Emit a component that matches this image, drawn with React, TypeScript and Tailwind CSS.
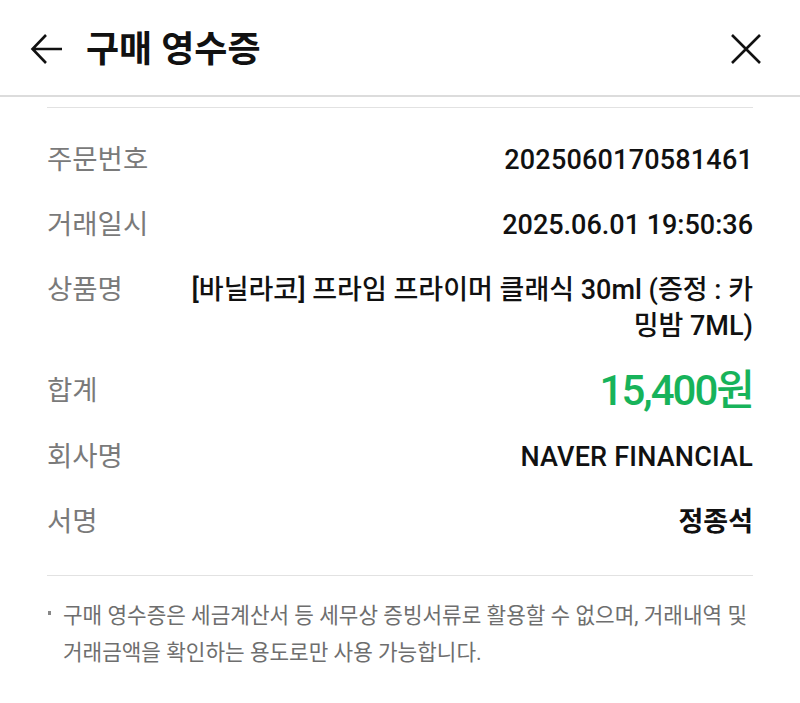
import React from "react";

export default function App() {
  const font = { fontFamily: "Roboto, 'Noto Sans CJK KR', 'Noto Sans', sans-serif" };
  return (
    <div className="w-[800px] h-[703px] bg-white overflow-hidden" style={font}>
      <div className="h-[97px] flex items-center justify-between pl-[30px] pr-[38px] border-b-2 border-[#dcdcdc]">
        <div className="flex items-center">
          <svg width="34" height="34" viewBox="0 0 34 34" className="mt-[2px]">
            <path d="M32 17H3M16 3L2.5 17L16 31" fill="none" stroke="#111" strokeWidth="2.6" />
          </svg>
          <div className="ml-[22px] mt-[4px] text-[36px] font-bold text-[#111] leading-none whitespace-nowrap">구매 영수증</div>
        </div>
        <svg width="32" height="32" viewBox="0 0 32 32" className="mt-[2px]">
          <path d="M2 2L30 30M30 2L2 30" fill="none" stroke="#111" strokeWidth="2.6" />
        </svg>
      </div>
      <div className="px-[47px] pt-[10px]">
        <div className="border-t border-[#e2e2e2]" />
        <div className="pt-[19px]">
          <Row label="주문번호" value={<span className="tracking-[0.2px]">2025060170581461</span>} />
          <Row label="거래일시" value={<span>2025.06.01 19:50:36</span>} />
          <Row
            label="상품명"
            value={
              <span>
                [바닐라코] 프라임 프라이머 클래식 30ml (증정 : 카
                <br />
                밍밤 7ML)
              </span>
            }
          />
          <div className="flex justify-between items-center h-[66px]">
            <div className="text-[27.5px] text-[#7a7a7a] shrink-0 w-[140px] leading-[36px]">합계</div>
            <span className="text-[42px] leading-[44px] font-medium text-[#17b35a] tracking-[-2px] whitespace-nowrap">15,400원</span>
          </div>
          <Row label="회사명" value={<span className="tracking-[0.2px]">NAVER FINANCIAL</span>} />
          <Row label="서명" value={<span className="font-bold">정종석</span>} />
        </div>
        <div className="mt-[21px] border-t border-[#e2e2e2]" />
        <div className="pt-[21px] flex text-[21.3px] leading-[37px] text-[#6e6e6e]">
          <div className="w-[16px] shrink-0 relative">
            <span className="absolute left-[1px] top-[14px] w-[3px] h-[4px] bg-[#888]" />
          </div>
          <div className="whitespace-nowrap">
            구매 영수증은 세금계산서 등 세무상 증빙서류로 활용할 수 없으며, 거래내역 및
            <br />
            거래금액을 확인하는 용도로만 사용 가능합니다.
          </div>
        </div>
      </div>
    </div>
  );
}

function Row({ label, value }: { label: string; value: React.ReactNode }) {
  return (
    <div className="flex justify-between items-start py-[14.5px] leading-[36px]">
      <div className="text-[27.5px] text-[#7a7a7a] shrink-0 w-[140px]">{label}</div>
      <div className="text-[27px] font-medium text-[#111] text-right whitespace-nowrap">{value}</div>
    </div>
  );
}
